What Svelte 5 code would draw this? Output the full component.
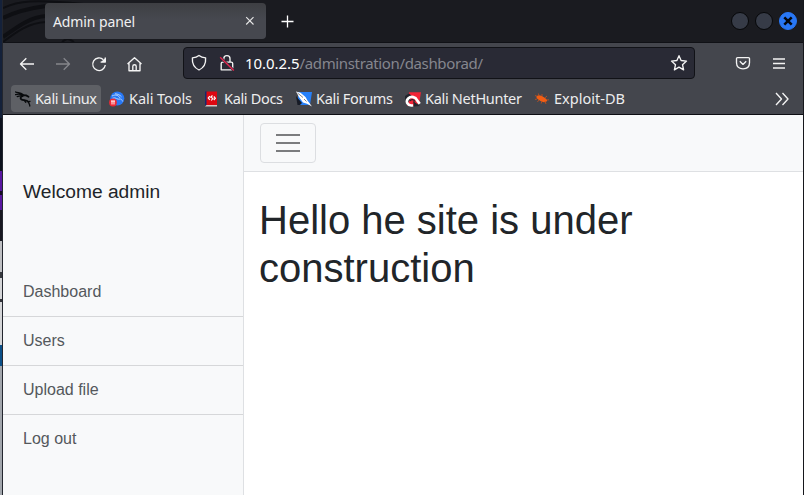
<script>
  const bookmarks = [
    { name: 'Kali Linux', icon: 'dragon', w: 62, pitch: 94 },
    { name: 'Kali Tools', icon: 'tools', w: 63, pitch: 95 },
    { name: 'Kali Docs', icon: 'docs', w: 59, pitch: 92 },
    { name: 'Kali Forums', icon: 'forums', w: 77, pitch: 109 },
    { name: 'Kali NetHunter', icon: 'hunter', w: 97, pitch: 129 },
    { name: 'Exploit-DB', icon: 'exploit', w: 71, pitch: 110 }
  ];
  const links = ['Dashboard', 'Users', 'Upload file', 'Log out'];
</script>

<div class="desktop">
  <div class="edge"></div>
  <div class="window">
    <header class="tabs">
      <svg class="art" width="100" height="42" viewBox="0 0 100 42" fill="none" stroke="#0e0f13">
        <path d="M0 18C14 11 28 8 43 6M0 37C14 27 27 17 43 16" stroke-width="4" />
        <path d="M0 42C12 33 24 23 43 22M59 42C64 38 65 38 71 42M0 8C15 1 30 -1 80 4" stroke-width="2" />
      </svg>
      <div class="tab">
        <span>Admin panel</span>
        <svg width="10" height="10" viewBox="0 0 10 10" stroke="#e8e8e8" stroke-width="1.1"><path d="M1.2 1.2l7.3 7.3M8.5 1.2L1.2 8.5" /></svg>
      </div>
      <svg class="plus" width="13" height="13" viewBox="0 0 13 13" stroke="#fff" stroke-width="1.3"><path d="M6.5 .5v12M.5 6.5h12" /></svg>
      <div class="controls">
        <i></i><i></i>
        <i class="close"><svg width="10" height="10" viewBox="0 0 10 10" stroke="#05070c" stroke-width="2.5"><path d="M1.3 1.3l7.4 7.4M8.7 1.3L1.3 8.7" /></svg></i>
      </div>
    </header>

    <div class="toolbar">
      <div class="nav">
        <svg width="16" height="16" viewBox="0 0 16 16"><path d="M15 8H1.5M7.3 2.2L1.5 8l5.8 5.8" /></svg>
        <svg class="dim" width="16" height="16" viewBox="0 0 16 16"><path d="M1 8h13.5M8.7 2.2L14.5 8l-5.8 5.8" /></svg>
        <svg width="16" height="16" viewBox="0 0 16 16"><path d="M12.4 3.700A6.300 6.300 0 1 0 14.300 9M9.600 6.100h4.700V1.500" /><path d="M10 6.100h4.600V1.700z" fill="#f4f4f4" stroke="none" /></svg>
        <svg width="16" height="16" viewBox="0 0 16 16"><path d="M.5 8L7.500 1.800l7 6.200M2 7.200v7.500h11V7.200M5.800 14.700v-4.500c0-1 .6-1.500 1.700-1.500s1.700.5 1.700 1.500v4.500" /></svg>
      </div>
      <div class="url">
        <svg width="16" height="18" viewBox="0 0 16 18"><path d="M8 1.4c2.1 1.7 4 2.2 6.6 2.5.4 5.2-1.2 9.6-6.6 12.1C2.6 13.5 1 9.1 1.4 3.9 4 3.6 5.9 3.1 8 1.4z" /></svg>
        <svg class="lock" width="16" height="18" viewBox="0 0 16 18"><path d="M4.8 8V4.7a3.1 3.1 0 0 1 6.2 0V8M2.2 15.8V9.6c0-1 .5-1.5 1.5-1.5h8.5c1 0 1.5.5 1.5 1.5v4.7c0 1-.5 1.5-1.5 1.5z" /><path d="M1.2 3.2L14.8 16.4" stroke="#292a35" stroke-width="2.6" /><path d="M1.2 3.2L14.8 16.4" stroke="#e22850" stroke-width="1.4" /></svg>
        <svg class="address" width="240" height="26"><text y="19" x="0" textLength="54.5" fill="#fff">10.0.2.5</text><text y="19" x="54.5" textLength="183.5" fill="#85868e">/adminstration/dashborad/</text></svg>
        <svg class="star" width="18" height="18" viewBox="0 0 18 18"><path d="M9 1.7l2.1 4.8 5.4.6-4 3.6 1.1 5.2L9 13.2l-4.6 2.7 1.1-5.2-4-3.6 5.4-.6z" /></svg>
      </div>
      <svg class="pocket" width="16" height="16" viewBox="0 0 16 16"><path d="M2.5 1.6h11c.7 0 1 .4 1 1v4.2c0 3.8-2.700 6-6.500 6s-6.500-2.200-6.500-6V2.600c0-.6.3-1 1-1zM4.800 5.300L8 8.400l3.200-3.100" /></svg>
      <svg class="menu" width="14" height="12" viewBox="0 0 14 12"><path d="M1 1h12M1 5.500h12M1 10h12" /></svg>
    </div>

    <div class="bookmarks">
      {#each bookmarks as b, i}
        <div class="bookmark" class:active={i === 0} style:--pitch={b.pitch + 'px'}>
          <svg class="favicon" width="16" height="16" viewBox="0 0 16 16">
            {#if b.icon === 'dragon'}
              <g fill="none" stroke="#080a0c" stroke-linecap="round"><path d="M.5 1C3 2 5.500 1.500 8 3.500M.5 3.600c2.500-.8 4.500-.8 6.500.4M2.200 5.600C4 4.800 5.500 4.800 7.300 5" stroke-width="1.300" /><path d="M7.500 4.200l3.700.2 2.300 1.400M8 4.800C5.500 5.500 4.800 7.300 6.500 8.500c1.500 1.100 5 .2 7 2.300" stroke-width="1.800" /><path d="M9.500 9.500l1.300 1.800M13.300 10.800l1.700-.5M13.300 10.800c.3 1.500 1.500 2.200 1.500 4.200" stroke-width="1.300" /></g>
            {:else if b.icon === 'tools'}
              <circle cx="8.3" cy="7.5" r="7" fill="#2878f5" />
              <path d="M3 5c4-2 6.500-.5 8 2M3.500 7.200c4-1.500 4 2 8 .8 1.300 0 1.500 1.200 2.200 2.500M6 2.800c3 .2 5 1.200 6.500 3" stroke="#b4d3ff" fill="none" />
              <circle cx="4" cy="11.500" r="3.900" fill="#ed2935" /><path d="M2 10h4M3 10v3.500M5 10v3.500" stroke="#fff" fill="none" />
            {:else if b.icon === 'docs'}
              <path d="M1 .5h2.500v14H1z" fill="#152b70" /><path d="M2.500 .5H13v14H2.500z" fill="#de0711" /><path d="M2.500 14H13v1.500H1z" fill="#d5c5c5" />
              <path d="M5.800 5.200L4.300 7l1.500 1.800M9.800 5.500L11.300 7.200 9.800 9M8.500 4.500L6.800 6.200l2 1.300-1.500 2" stroke="#fff" fill="none" stroke-width="1.200" />
            {:else if b.icon === 'forums'}
              <path d="M2 1h14l-2 13H2z" fill="#2580fa" /><path d="M0 5l6 7-2 2H1.500z" fill="#171b26" /><path d="M0 .5l4.500 1.200L9.500 6l2 3.500L16 15.500l-5-2.700-4-1.300L3 6z" fill="#fff" /><path d="M1.500 2l5.500 4.500M8 8l2.500 2.500" stroke="#4a4e58" stroke-width=".7" />
            {:else if b.icon === 'hunter'}
              <path d="M4 1.300h12l-1.600 9.700L11 14.500H2z" fill="#f22436" /><path d="M0 5l4-2.500L7 5 3 12H0zM8 10l7 5-6 .5z" fill="#22252d" /><path d="M8 14.300C2.500 15.500 .3 10.300 3.200 7.500c3-2.800 7.500-1.500 8.700 1.500l2.800 3.800" fill="none" stroke="#fff" stroke-width="2.700" /><path d="M5 10c1-2 4-2 5 .5" fill="none" stroke="#22252d" stroke-width="1.300" />
            {:else}
              <path d="M2.500 5.500C4.500 3.300 7 4.500 9.500 6c3.500 2 4.300 3.500 3.100 4.500-2.300 1.500-5.600.2-7.600-1.400C3.700 8 2 6.900 2.500 5.500z" fill="#f25d13" /><path d="M5 5L4.400 2.500M8 5V3M11 6.800l2-1.800M3 8l-2 .5M5 9l-1.600 2M8 10l-.8 2.500M11 10l1 3M1 4.500l2 .8M13 9l2-.2" stroke="#b94f21" stroke-width=".9" />
            {/if}
          </svg>
          <svg class="label" width={b.w + 1} height="24"><text x="0" y="17" textLength={b.w}>{b.name}</text></svg>
        </div>
      {/each}
      <svg class="more" width="14" height="14" viewBox="0 0 14 14"><path d="M1 1l5.500 6L1 13M7.500 1L13 7l-5.500 6" /></svg>
    </div>

    <div class="page">
      <aside>
        <div class="welcome">Welcome admin</div>
        <nav>{#each links as link}<a href="#{link}">{link}</a>{/each}</nav>
      </aside>
      <main>
        <div class="navbar"><button aria-label="Toggle menu"><b></b><b></b><b></b></button></div>
        <h1>Hello he site is under construction</h1>
      </main>
    </div>
  </div>
</div>

<style>
  :global(body) { margin: 0; overflow: hidden; background: #16171c; }
  .desktop { width: 804px; height: 495px; display: flex; overflow: hidden; font-family: "Noto Sans", sans-serif; background: #16171c; }
  .edge { width: 2px; border-right: 1px solid #23262e; background: linear-gradient(#14213a 0 118px, #0d111d 118px 171px, #5917a0 171px 191px, #160b26 191px 195px, #5917a0 195px 210px, #171820 210px 241px, #bfc0c3 241px 272px, #37393f 272px 278px, #d5d6d8 278px 299px, #33343a 299px 302px, #d5d6d8 302px 345px, #0b5088 345px 366px, #a2a6ac 366px); }
  .window { width: 800px; border-right: 1px solid #16171c; display: flex; flex-direction: column; }
  svg { display: block; flex: none; fill: none; }
  .tabs { position: relative; height: 42px; border-bottom: 1px solid #101116; background: #1a1b20; display: flex; align-items: center; box-sizing: content-box; }
  .art { position: absolute; left: 0; top: 0; }
  .tab { position: relative; width: 221px; height: 36px; margin-left: 42px; padding: 0 11px 0 8px; box-sizing: border-box; border-radius: 4px; display: flex; align-items: center; justify-content: space-between; background: linear-gradient(#3e3f43, #46484f 45%); color: #f0f0f1; font-size: 14px; }
  .tab span { line-height: 20px; padding-top: 2px; letter-spacing: -.1px; }
  .plus { margin-left: 15px; }
  .controls { margin-left: auto; margin-right: 6px; display: flex; gap: 6px; }
  .controls i { width: 18px; height: 18px; box-sizing: border-box; border: 1px solid #060709; border-radius: 50%; background: #363b47; display: flex; align-items: center; justify-content: center; }
  .controls .close { background: #2877f6; border-color: #2877f6; }
  .toolbar { height: 41px; background: #44464d; display: flex; align-items: center; }
  .nav { display: flex; gap: 20px; padding-left: 16px; width: 164px; box-sizing: content-box; }
  .nav svg, .url svg, .pocket, .menu, .more { stroke: #f4f4f4; stroke-width: 1.35; stroke-linejoin: round; }
  .nav .dim { stroke: #85868b; }
  .url { width: 512px; height: 32px; margin-top: -1px; box-sizing: border-box; border: 1px solid #111217; border-radius: 4px; background: #292a35; display: flex; align-items: center; padding: 0 6px 0 7px; }
  .lock { margin-left: 12px; }
  .url .address { margin-left: 10px; stroke: none; font-size: 15px; }
  .star { margin-left: auto; }
  .pocket { margin-left: 40px; }
  .menu { margin-left: 21px; }
  .bookmarks { height: 30px; border-bottom: 1px solid #0d0e13; background: #44464d; display: flex; align-items: center; padding: 0 14px 0 8px; }
  .bookmark { width: var(--pitch); height: 27px; margin-top: -1px; padding-left: 4px; box-sizing: border-box; display: flex; align-items: center; gap: 4px; flex: none; }
  .active { width: 90px; margin-right: 4px; background: #5e6065; border-radius: 4px; }
  .label { font-size: 14.5px; fill: #ededee; }
  .more { margin-left: auto; }
  .page { height: 380px; display: flex; background: #fff; color: #212529; font-family: "Liberation Sans", Arial, sans-serif; }
  aside { width: 240px; border-right: 1px solid #dee0e3; background: #f8f9fa; }
  .welcome { height: 153px; box-sizing: border-box; padding: 65px 20px 0; font-size: 19.2px; line-height: 23px; }
  nav { display: flex; flex-direction: column; }
  a { height: 49px; box-sizing: border-box; padding: 12px 20px; border-bottom: 1px solid #d6d7d9; font-size: 16px; line-height: 24px; color: #54585c; text-decoration: none; }
  a + a:last-child { border-bottom: 0; }
  main { flex: 1; }
  .navbar { height: 56px; border-bottom: 1px solid #dee0e3; padding: 0 16px; display: flex; align-items: center; background: #f8f9fa; }
  button { width: 56px; height: 40px; padding: 0; border: 1px solid #dcdee1; border-radius: 4px; background: transparent; display: flex; flex-direction: column; align-items: center; justify-content: center; gap: 6px; }
  button b { width: 24px; height: 2px; background: #7b7c7e; }
  h1 { margin: 24px 15px 0; font-size: 40px; line-height: 48px; font-weight: 400; }
</style>
